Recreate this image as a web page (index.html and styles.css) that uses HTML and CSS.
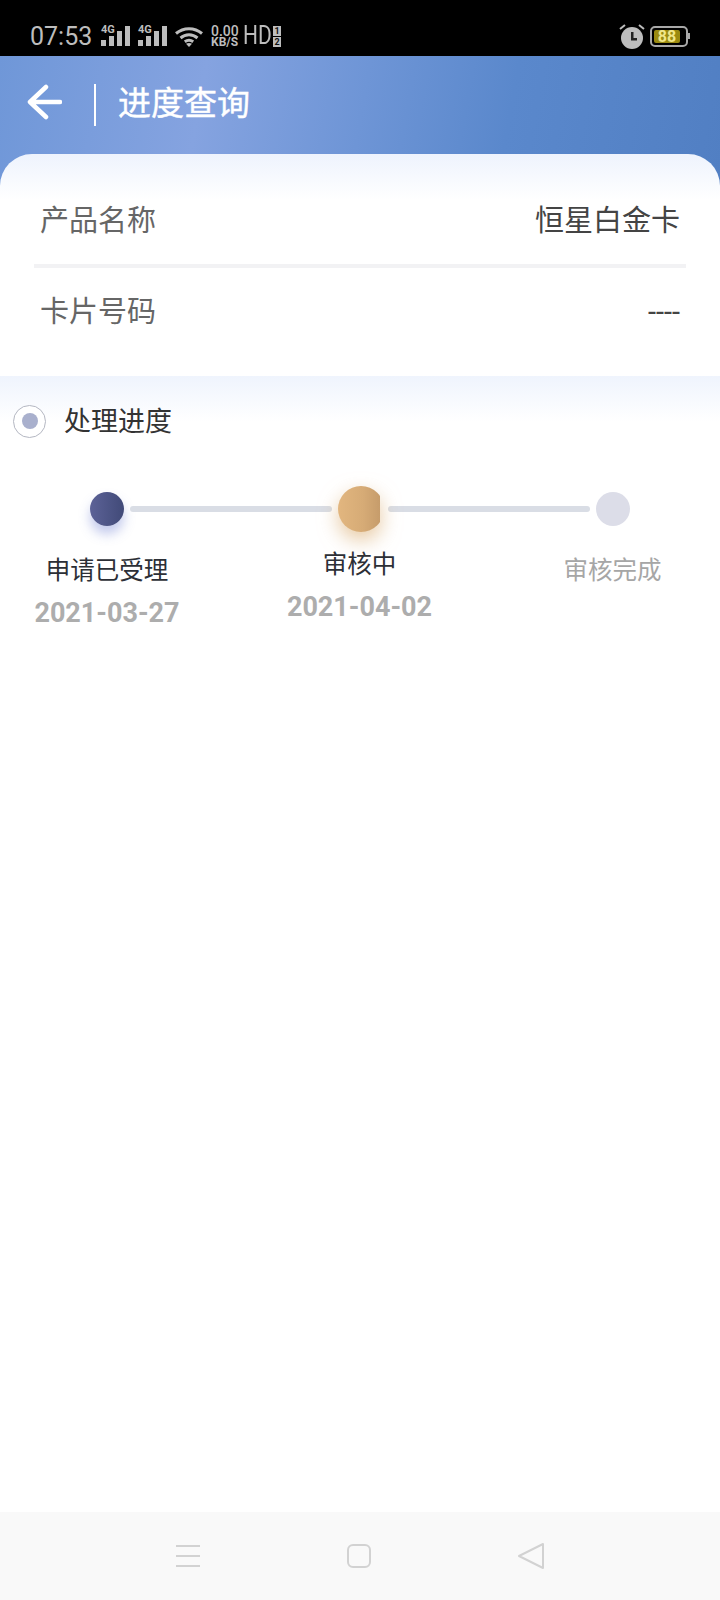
FILE: index.html
```html
<!DOCTYPE html>
<html lang="zh-CN">
<head>
    <meta charset="UTF-8">
    <meta name="viewport" content="width=device-width, initial-scale=1.0">
    <title>进度查询</title>
    <link rel="stylesheet" href="styles.css">
</head>
<body>

<div class="page">
    <!-- Status bar -->
    <div class="status-bar">
        <span class="time">07:53</span>
        <div class="signal">
            <span class="signal-type">4G</span>
            <svg width="30" height="20" viewBox="0 0 30 20"><path d="M0 14h5v6H0zM8 10h5v10H8zM16 5h5v15h-5zM24 0h5v20h-5z" fill="#bdbdbd"/></svg>
        </div>
        <div class="signal signal-second">
            <span class="signal-type">4G</span>
            <svg width="30" height="20" viewBox="0 0 30 20"><path d="M0 14h5v6H0zM8 10h5v10H8zM16 5h5v15h-5zM24 0h5v20h-5z" fill="#bdbdbd"/></svg>
        </div>
        <svg class="wifi" width="28" height="21" viewBox="0 0 28 21" fill="none" stroke="#bdbdbd" stroke-width="3">
            <path d="M1 7.500C8.500 1 19.500 1 27 7.500"/>
            <path d="M5.500 12C10.500 7.800 17.500 7.800 22.500 12"/>
            <path d="M9.800 15.800C12.300 14 15.700 14 18.200 15.800"/>
            <path d="M14 21l-3-3.200c1.800-1 4.200-1 6 0z" fill="#bdbdbd" stroke="none"/>
        </svg>
        <div class="speed">
            <span class="speed-value">0.00</span>
            <span class="speed-unit">KB/S</span>
        </div>
        <span class="hd">HD</span>
        <div class="sim">
            <span class="sim-num">1</span>
            <span class="sim-num">2</span>
        </div>
        <div class="status-right">
            <svg width="26" height="25" viewBox="0 0 26 25">
                <circle cx="13" cy="14" r="11" fill="#bdbdbd"/>
                <path d="M1 5l5-4M25 5l-5-4" stroke="#bdbdbd" stroke-width="2" fill="none"/>
                <path d="M12 8h2.500v6H18v2.500h-6z" fill="#222"/>
            </svg>
            <div class="battery">
                <div class="battery-fill">88</div>
            </div>
            <span class="battery-nub"></span>
        </div>
    </div>

    <!-- Header -->
    <div class="header">
        <svg class="back" width="36" height="36" viewBox="0 0 36 36" fill="none" stroke="#fff" stroke-width="4.500" stroke-linecap="round" stroke-linejoin="round">
            <path d="M34 18H4M20 3L4 18 20 33"/>
        </svg>
        <span class="header-line"></span>
        <h1 class="title">进度查询</h1>
    </div>

    <!-- Product info -->
    <div class="card">
        <div class="info-row info-first">
            <span class="info-label">产品名称</span>
            <span class="info-value">恒星白金卡</span>
        </div>
        <div class="info-row info-second">
            <span class="info-label">卡片号码</span>
            <span class="info-value">----</span>
        </div>
    </div>

    <!-- Progress -->
    <div class="progress">
        <div class="progress-head">
            <span class="marker"><span class="marker-dot"></span></span>
            <span class="progress-title">处理进度</span>
        </div>
        <div class="track">
            <span class="dot dot-done"></span>
            <span class="track-line"></span>
            <span class="dot-current-wrap"><span class="dot-current"></span></span>
            <span class="track-line"></span>
            <span class="dot dot-todo"></span>
        </div>
        <div class="steps">
            <div class="step">
                <div class="step-name">申请已受理</div>
                <div class="step-date">2021-03-27</div>
            </div>
            <div class="step step-current">
                <div class="step-name">审核中</div>
                <div class="step-date">2021-04-02</div>
            </div>
            <div class="step">
                <div class="step-name step-todo">审核完成</div>
            </div>
        </div>
    </div>

    <!-- Navigation bar -->
    <div class="nav-bar">
        <svg width="26" height="24" viewBox="0 0 26 24" stroke="#d2d2d2" stroke-width="2" fill="none"><path d="M1 2h24M1 12h24M1 22h24"/></svg>
        <svg width="26" height="26" viewBox="0 0 26 26" fill="none" stroke="#d2d2d2" stroke-width="2"><rect x="2" y="2" width="22" height="22" rx="5"/></svg>
        <svg width="28" height="28" viewBox="0 0 28 28" fill="none" stroke="#d2d2d2" stroke-width="2" stroke-linejoin="round"><path d="M26 2v24L2 14z"/></svg>
    </div>
</div>

</body>
</html>
```

FILE: styles.css
```css
* {
    box-sizing: border-box;
}
body {
    margin: 0;
    background-color: #fff;
    font-family: Roboto, "Noto Sans CJK SC", sans-serif;
}
.page {
    width: 720px;
    height: 1600px;
    display: flex;
    flex-direction: column;
    overflow: hidden;
}

/* status bar */
.status-bar {
    height: 56px;
    background-color: #000;
    color: #bdbdbd;
    display: flex;
    align-items: center;
    padding: 16px 0 0 30px;
    flex-shrink: 0;
}
.time {
    font-size: 25px;
    width: 71px;
}
.signal {
    position: relative;
    width: 30px;
    height: 20px;
    display: flex;
}
.signal-second {
    margin-left: 7px;
}
.signal-type {
    position: absolute;
    left: 0;
    top: -1px;
    font-size: 11px;
    line-height: 10px;
    font-weight: 700;
}
.wifi {
    margin-left: 7px;
}
.speed {
    display: flex;
    flex-direction: column;
    margin-left: 8px;
    width: 32px;
}
.speed-value {
    font-size: 14px;
    line-height: 12px;
    font-weight: 500;
}
.speed-unit {
    font-size: 12px;
    line-height: 10px;
    font-weight: 700;
}
.hd {
    font-size: 25px;
    line-height: 26px;
    width: 30px;
    transform: scaleX(0.84);
    transform-origin: left center;
}
.sim {
    display: flex;
    flex-direction: column;
    gap: 1px;
}
.sim-num {
    width: 8px;
    height: 10px;
    background-color: #bdbdbd;
    color: #111;
    font-size: 9px;
    line-height: 10px;
    font-weight: 700;
    text-align: center;
    overflow: hidden;
}
.status-right {
    margin-left: auto;
    display: flex;
    align-items: center;
    padding-right: 30px;
}
.battery {
    width: 38px;
    height: 21px;
    border: 2px solid #a8a8a8;
    border-radius: 5px;
    padding: 2px;
    margin-left: 5px;
}
.battery-fill {
    width: 26px;
    height: 13px;
    background-color: #9a8a10;
    border-radius: 2px;
    color: #f0e68a;
    font-size: 16px;
    line-height: 13px;
    font-weight: 700;
    text-align: center;
}
.battery-nub {
    width: 2px;
    height: 6px;
    background-color: #a8a8a8;
}

/* header */
.header {
    height: 130px;
    margin-bottom: -32px;
    padding: 0 0 32px 26px;
    display: flex;
    align-items: center;
    flex-shrink: 0;
    background: linear-gradient(100deg, #6f97d8 0%, #85a3e0 28%, #6e95d6 50%, #5a88cc 70%, #517fc3 100%);
}
.back {
    margin-bottom: 6px;
}
.header-line {
    width: 2px;
    height: 42px;
    background-color: #fff;
    margin-left: 32px;
}
.title {
    margin: 0 0 9px 22px;
    font-size: 33px;
    font-weight: 400;
    color: #fff;
    -webkit-text-stroke: 0.4px #fff;
}

/* info card */
.card {
    background: linear-gradient(#eef3fd 0, #fff 46px);
    border-radius: 32px 32px 0 0;
    flex-shrink: 0;
    position: relative;
}
.info-row {
    display: flex;
    justify-content: space-between;
    margin: 0 34px;
    padding: 0 6px;
    line-height: 40px;
    font-size: 29px;
}
.info-first {
    padding-top: 47px;
    padding-bottom: 23px;
    border-bottom: 4px solid #f2f2f4;
}
.info-second {
    padding-top: 24px;
    padding-bottom: 44px;
}
.info-label {
    color: #666;
}
.info-value {
    color: #444;
}

/* progress */
.progress {
    flex: 1;
    background: linear-gradient(#eff4fd 0, #fff 46px);
}
.progress-head {
    display: flex;
    align-items: center;
    height: 36px;
    margin-top: 27px;
    padding-left: 13px;
}
.marker {
    width: 33px;
    height: 33px;
    border: 1.5px solid #b4b7c2;
    border-radius: 50%;
    background-color: #fff;
    display: flex;
    align-items: center;
    justify-content: center;
}
.marker-dot {
    width: 16px;
    height: 16px;
    border-radius: 50%;
    background-color: #a9b0cd;
}
.progress-title {
    margin-left: 18px;
    padding-top: 2px;
    font-size: 27px;
    line-height: 36px;
    color: #333;
}
.track {
    display: flex;
    align-items: center;
    height: 46px;
    margin-top: 47px;
    padding-left: 90px;
}
.dot {
    width: 34px;
    height: 34px;
    border-radius: 50%;
    flex-shrink: 0;
}
.dot-done {
    background: linear-gradient(90deg, #5c6297, #414a78);
    box-shadow: 0 8px 12px rgba(80, 100, 200, 0.35);
}
.dot-todo {
    background-color: #dcdde8;
    margin-left: 6px;
}
.track-line {
    width: 202px;
    height: 6px;
    border-radius: 3px;
    background-color: #d9dde5;
    margin-left: 6px;
}
.dot-current-wrap {
    width: 42px;
    height: 46px;
    margin-left: 6px;
    margin-right: 2px;
    filter: drop-shadow(0 8px 10px rgba(215, 165, 100, 0.6));
}
.dot-current {
    display: block;
    width: 42px;
    height: 46px;
    background: linear-gradient(90deg, #e2b67f, #d6ab76 60%, #c69c6b);
    clip-path: circle(23px at 23px 23px);
}
.steps {
    display: grid;
    grid-template-columns: 214px 291px 215px;
    margin-top: 21px;
    text-align: center;
}
.step-name {
    font-size: 24.5px;
    line-height: 36px;
    color: #2c2f36;
}
.step-todo {
    color: #a6a6a6;
}
.step-date {
    font-size: 27px;
    line-height: 40px;
    margin-top: 4px;
    font-weight: 700;
    color: #adadad;
}
.step-current {
    margin-top: -6px;
}

/* nav bar */
.nav-bar {
    height: 88px;
    background-color: #f9f9f9;
    flex-shrink: 0;
    display: flex;
    align-items: center;
    gap: 145px;
    padding-left: 175px;
}
```
